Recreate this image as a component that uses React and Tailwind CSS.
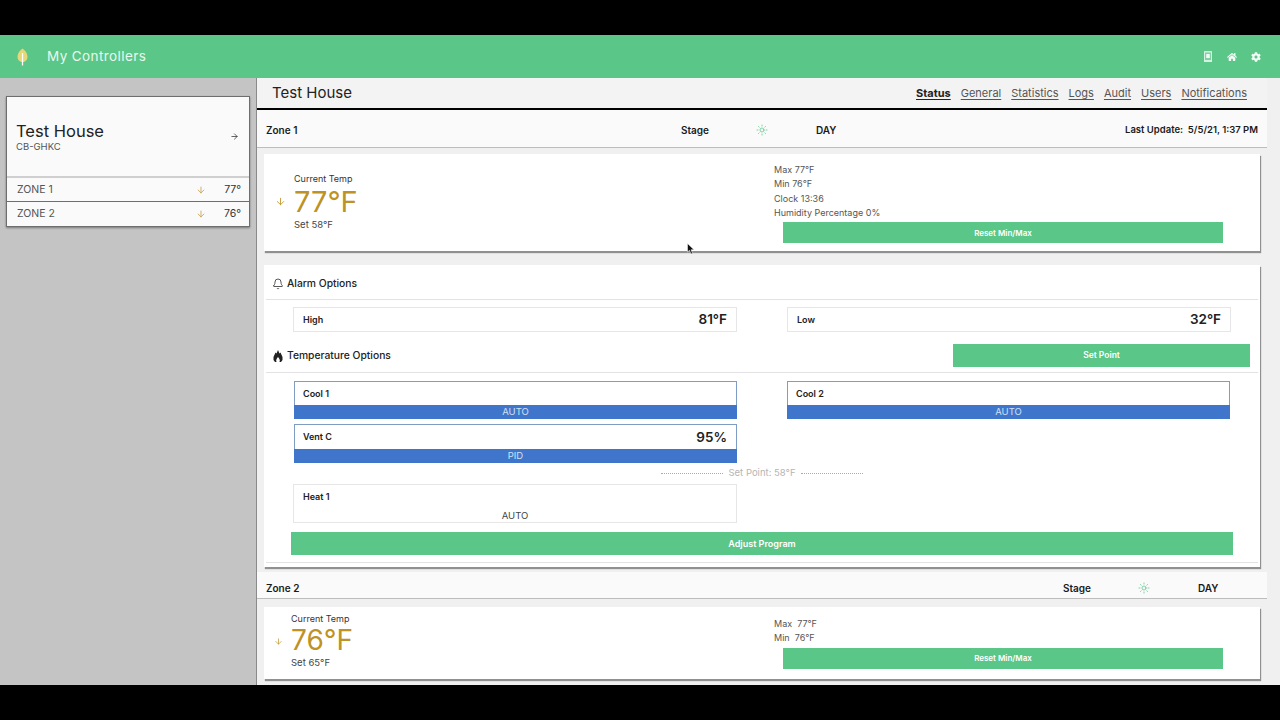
import React from 'react';
import { ArrowDown, ArrowRight, Bell, Sun } from 'lucide-react';
import { FaCog, FaHome } from 'react-icons/fa';

const tabs = ['Status', 'General', 'Statistics', 'Logs', 'Audit', 'Users', 'Notifications'];

function ZoneHeader({ name, className, children }) {
  return (
    <div className={`flex items-center bg-[#fafafa] border-b border-[#bdbdbd] pl-[9px] text-[10px] font-semibold text-[#1a1a1a] ${className}`}>
      <span className="w-[385px]">{name}</span>
      {children}
    </div>
  );
}

function Stage({ width, iconGap, dayGap }) {
  return (
    <div className={`flex items-center ${width}`}>
      <span className={iconGap}>Stage</span>
      <Sun size={12} strokeWidth={1.5} className="text-[#5ac687]" />
      <span className={dayGap}>DAY</span>
    </div>
  );
}

function Box({ label, value, mode, active, tall, className }) {
  return (
    <div className={`${active ? 'w-[443px]' : 'w-[444px]'} ${className}`}>
      <div className={`flex items-center justify-between bg-white border ${active ? 'pl-[8px] pr-[9px] border-[#7f9cc2] border-b-0' : 'px-[9px] border-[#e6e6e6]'} ${active && !tall ? 'h-[24px]' : 'h-[25px]'}`}>
        <span className="text-[9px] font-semibold text-[#222]">{label}</span>
        {value && <span className="text-[13.5px] font-semibold text-[#222]">{value}</span>}
      </div>
      {mode && (
        <div className="h-[14px] bg-[#3f76cc] text-[#cfe0f5] text-[9.5px] leading-[14px] text-center">{mode}</div>
      )}
    </div>
  );
}

function Stat({ children }) {
  return <div className="h-[14.3px] leading-[14.3px] text-[9px] text-[#555]">{children}</div>;
}

export default function App() {
  return (
    <div className="w-[1280px] h-[720px] bg-black overflow-hidden relative font-['Inter',sans-serif] pt-[35px]">
      {/* top bar */}
      <header className="h-[43px] bg-[#5ac687] flex items-center pl-[17px] pr-[19px] text-white">
        <svg width="11" height="18" viewBox="0 0 11 18">
          <path d="M5.5 0.5C9 3 10.5 6 10.5 9C10.5 12 8 14 5.5 14C3 14 0.5 12 0.5 9C0.5 6 2 3 5.5 0.5Z" fill="#e6d77a" />
          <path d="M5.5 5V17.5" stroke="#fff" strokeWidth="1.3" />
        </svg>
        <span className="ml-[19px] text-[13.5px] tracking-[0.4px] text-[#e9f8ef]">My Controllers</span>
        <div className="ml-auto flex items-center gap-[15px]">
          <svg width="8" height="11" viewBox="0 0 8 11">
            <rect x="0" y="0" width="8" height="11" rx="0.5" fill="#d6f1e1" />
            <rect x="1" y="1.5" width="6" height="7.5" fill="#7fd3a2" />
            <rect x="2.2" y="3" width="3.6" height="4" fill="#f2fbf6" />
          </svg>
          <FaHome size={10} className="text-[#f2fbf6]" />
          <FaCog size={10} className="text-[#f2fbf6] -ml-[1px]" />
        </div>
      </header>

      <div className="flex h-[607px]">
        {/* sidebar */}
        <aside className="w-[257px] shrink-0 bg-[#c4c4c4] border-r border-[#8a8a8a] pt-[18px] pl-[6px]">
          <div className="w-[244px] bg-[#fafafa] border border-[#6e6e6e] shadow-[0_1px_2px_rgba(0,0,0,0.4)]">
            <div className="h-[81px] flex items-center justify-between pl-[9px] pr-[10px] border-b-2 border-[#cfcfcf]">
              <div className="mt-[-1px]">
                <div className="text-[16.5px] leading-[20px] text-[#222]">Test House</div>
                <div className="text-[9.5px] leading-[11px] text-[#555]">CB-GHKC</div>
              </div>
              <ArrowRight size={9} className="text-[#333]" />
            </div>
            {[['ZONE 1', '77°'], ['ZONE 2', '76°']].map(([zone, temp], i) => (
              <div key={zone} className={`h-[24px] flex items-center pl-[10px] pr-[8px] text-[10.5px] text-[#555] ${i === 0 ? 'border-b border-[#6e6e6e]' : ''}`}>
                <span className="flex-1">{zone}</span>
                <ArrowDown size={10} className="text-[#c8a050] mr-[18px]" />
                <span className="text-[#333] w-[17px] text-right">{temp}</span>
              </div>
            ))}
          </div>
        </aside>

        {/* main */}
        <main className="flex-1 bg-[#f0f0f0] overflow-hidden">
          <div className="w-[1010px]">
            <div className="h-[32px] flex items-center justify-between pl-[15px] pr-[20px] bg-[#f3f3f3] border-b-2 border-black">
              <span className="text-[15px] text-[#222] mt-[1px]">Test House</span>
              <nav className="flex gap-[10px] mt-[1px] text-[11px] text-[#555]">
                {tabs.map((tab, i) => (
                  <span key={tab} className={`underline underline-offset-2 ${i === 0 ? 'font-bold text-[#222]' : ''}`}>{tab}</span>
                ))}
              </nav>
            </div>

            <ZoneHeader name="Zone 1" className="h-[38px] pt-[3px]">
              <Stage width="w-[204px]" iconGap="w-[75px] ml-[30px]" dayGap="ml-[48px]" />
              <span className="ml-auto mr-[9px] text-[9.5px] whitespace-nowrap">Last Update:&nbsp; 5/5/21, 1:37 PM</span>
            </ZoneHeader>
          </div>

          <div className="w-[996px] ml-[7px] mt-[6px]">
            {/* current temp card */}
            <section className="h-[97px] bg-white flex shadow-[1px_2px_1px_rgba(0,0,0,0.4)]">
              <div className="w-[510px] flex items-center pl-[11px]">
                <ArrowDown size={11} className="text-[#c19a35] -mt-[3px]" />
                <div className="ml-[8px] -mt-[1px]">
                  <div className="text-[9px] leading-[12px] text-[#333]">Current Temp</div>
                  <div className="text-[29px] leading-[33px] text-[#bd9226]">77°F</div>
                  <div className="text-[9.5px] leading-[14px] text-[#444]">Set 58°F</div>
                </div>
              </div>
              <div className="flex-1 pt-[9px]">
                <Stat>Max 77°F</Stat>
                <Stat>Min 76°F</Stat>
                <Stat>Clock 13:36</Stat>
                <Stat>Humidity Percentage 0%</Stat>
                <div className="ml-[9px] mt-[2px] w-[440px] h-[21px] bg-[#5ac687] text-white text-[8px] font-semibold leading-[22px] text-center">Reset Min/Max</div>
              </div>
            </section>

            {/* options card */}
            <section className="mt-[14px] h-[302px] bg-white px-[2px] shadow-[1px_2px_1px_rgba(0,0,0,0.4)]">
              <div className="h-[35px] pt-[3px] flex items-center pl-[6px] border-b border-[#e2e2e2] text-[10.3px] font-medium text-[#222]">
                <Bell size={12} strokeWidth={1.5} />
                <span className="ml-[3px]">Alarm Options</span>
              </div>
              <div className="flex gap-[50px] ml-[27px] mt-[7px]">
                <Box label="High" value="81°F" />
                <Box label="Low" value="32°F" />
              </div>
              <div className="h-[34px] mt-[7px] flex items-center pl-[6px] border-b border-[#e2e2e2] text-[10.3px] font-medium text-[#222]">
                <svg width="10" height="12" viewBox="0 0 10 12" className="ml-[1px]">
                  <path d="M5 0L6.5 3.5L7.5 2.5L9.5 7V10L8 12H6.5C7.5 10 6 8 5 7C4 8 2.5 10 3.5 12H2L0.5 10V7L2.5 2.5L3.5 3.5Z" fill="#222" />
                </svg>
                <span className="ml-[4px]">Temperature Options</span>
                <div className="ml-auto mr-[8px] w-[297px] h-[23px] bg-[#5ac687] text-white text-[8.5px] font-semibold leading-[23px] text-center">Set Point</div>
              </div>
              <div className="flex gap-[50px] ml-[28px] mt-[8px]">
                <Box label="Cool 1" mode="AUTO" active />
                <Box label="Cool 2" mode="AUTO" active />
              </div>
              <Box label="Vent C" value="95%" mode="PID" active tall className="ml-[28px] mt-[5px]" />
              <div className="flex items-center justify-center h-[20px] text-[9.5px] text-[#b5b5b5]">
                <span className="w-[62px] border-t border-dotted border-[#aaa]" />
                <span className="mx-[5px]">Set Point: 58°F</span>
                <span className="w-[62px] border-t border-dotted border-[#aaa]" />
              </div>
              <div className="ml-[27px] mt-[1px] w-[444px] h-[39px] border border-[#e6e6e6] relative">
                <div className="absolute left-[9px] top-[5px] text-[9px] font-semibold text-[#222]">Heat 1</div>
                <div className="absolute inset-x-0 -bottom-[1px] text-center text-[9.5px] text-[#444]">AUTO</div>
              </div>
              <div className="ml-[25px] mt-[9px] w-[942px] h-[23px] bg-[#5ac687] text-white text-[9px] font-semibold leading-[23px] text-center">Adjust Program</div>
              <div className="mt-[7px] border-t border-[#e2e2e2]" />
            </section>
          </div>

          <div className="w-[1010px] mt-[5px]">
            <ZoneHeader name="Zone 2" className="h-[27px] pt-[6px]">
              <div className="ml-[420px] w-[204px]">
                <Stage width="w-[204px]" iconGap="w-[75px]" dayGap="ml-[48px]" />
              </div>
            </ZoneHeader>
          </div>

          <section className="w-[996px] ml-[7px] mt-[8px] h-[72px] bg-white flex shadow-[1px_2px_1px_rgba(0,0,0,0.4)]">
            <div className="w-[510px] flex items-center pl-[10px]">
              <ArrowDown size={9} className="text-[#c19a35] -mt-[3px]" />
              <div className="ml-[8px] -mt-[3px]">
                <div className="text-[9px] leading-[11px] text-[#333]">Current Temp</div>
                <div className="text-[28px] leading-[32px] text-[#bd9226]">76°F</div>
                <div className="text-[9.5px] leading-[14px] text-[#444]">Set 65°F</div>
              </div>
            </div>
            <div className="flex-1 pt-[10px]">
              <Stat>Max&nbsp; 77°F</Stat>
              <Stat>Min&nbsp; 76°F</Stat>
              <div className="ml-[9px] mt-[2px] w-[440px] h-[21px] bg-[#5ac687] text-white text-[8px] font-semibold leading-[21px] text-center">Reset Min/Max</div>
            </div>
          </section>
        </main>
      </div>

      {/* mouse cursor from the recording */}
      <svg className="absolute left-[687px] top-[243px]" width="8" height="12" viewBox="0 0 8 12">
        <path d="M0.5 0.5V9L2.5 7.3L4 11L5.5 10.3L4 6.8H7Z" fill="#111" stroke="#fff" strokeWidth="0.5" />
      </svg>
    </div>
  );
}
